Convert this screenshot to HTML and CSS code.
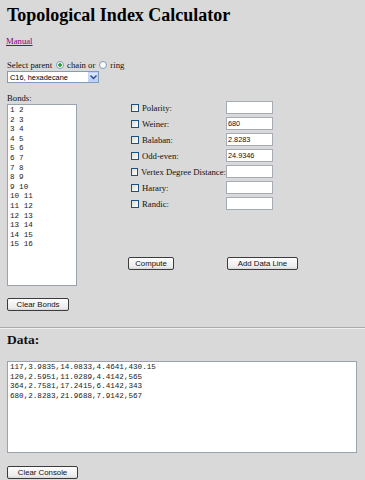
FILE: index.html
```html
<!doctype html>
<html lang="en">
 <head>
  <meta charset="UTF-8">
  <title>Topological Index Calculator</title>
  <link rel="stylesheet" href="styles.css">
 </head>
 <body>
  <div class="top">
   <h1>Topological Index Calculator</h1>
   <p class="manual"><a href="#">Manual</a></p>

   <div class="parent"><span>Select parent</span><input type="radio" name="par" checked><span>chain or</span><input type="radio" name="par"><span>ring</span></div>
   <div class="selbox">
    <select id="parent">
     <option>C16, hexadecane</option>
    </select>
    <span class="arrow"><svg width="7" height="5" viewBox="0 0 7 5"><path d="M0.5 0.5 L3.5 3.5 L6.5 0.5" fill="none" stroke="#2a4d8a" stroke-width="1.4"/></svg></span>
   </div>

   <div class="bondlbl">Bonds:</div>
   <div class="main">
    <div class="left">
     <textarea id="bonds" class="bonds">1 2
2 3
3 4
4 5
5 6
6 7
7 8
8 9
9 10
10 11
11 12
12 13
13 14
14 15
15 16</textarea>
     <button type="button" class="btn clear">Clear Bonds</button>
    </div>

    <div class="right">
     <div class="indices">
      <label><input type="checkbox"> Polarity:</label><input type="text" class="val">
      <label><input type="checkbox"> Weiner:</label><input type="text" class="val" value="680">
      <label><input type="checkbox"> Balaban:</label><input type="text" class="val" value="2.8283">
      <label><input type="checkbox"> Odd-even:</label><input type="text" class="val" value="24.9346">
      <label><input type="checkbox"> Vertex Degree Distance:</label><input type="text" class="val">
      <label><input type="checkbox"> Harary:</label><input type="text" class="val">
      <label><input type="checkbox"> Randic:</label><input type="text" class="val">
     </div>
     <div class="actions">
      <button type="button" class="btn compute">Compute</button>
      <button type="button" class="btn adddata">Add Data Line</button>
     </div>
    </div>
   </div>
  </div>

  <hr>

  <div class="bottom">
   <h2>Data:</h2>
   <textarea id="console" class="console">117,3.9835,14.0833,4.4641,430.15
120,2.5951,11.0289,4.4142,565
364,2.7581,17.2415,6.4142,343
680,2.8283,21.9688,7.9142,567</textarea>
   <button type="button" class="btn clearcon">Clear Console</button>
  </div>
 </body>
</html>
```

FILE: styles.css
```css
*
{
  box-sizing: border-box;
}
body
{
  margin: 0;
  background: #d9d9d9;
  font-family: 'Liberation Serif', serif;
  font-size: 8.7px;
  color: #111;
}
.top, .bottom
{
  padding: 0 7px;
}
h1
{
  margin: 0;
  font-size: 18px;
  font-weight: bold;
  line-height: 30px;
  color: #000;
}
.manual
{
  margin: 5px 0 0 -1px;
  line-height: 12px;
}
.manual a
{
  color: #800080;
}
.parent
{
  margin-top: 13px;
  height: 10px;
  line-height: 10px;
  display: flex;
  align-items: center;
}
.parent input
{
  appearance: none;
  width: 8px;
  height: 8px;
  margin: 0 3px 0 4px;
  border: 1px solid #7f9db9;
  border-radius: 50%;
  background: #fafafa;
}
.parent input:checked
{
  background: radial-gradient(circle, #2f9a2f 0 1.5px, #fafafa 2px);
}
.selbox
{
  position: relative;
  width: 92px;
  height: 12px;
  margin-top: 1px;
}
.selbox select
{
  appearance: none;
  display: block;
  width: 100%;
  height: 12px;
  border: 1px solid #7f9db9;
  border-radius: 0;
  background: #fff;
  font-family: 'Liberation Sans', sans-serif;
  font-size: 7.4px;
  padding: 0 0 0 2px;
  color: #000;
}
.selbox .arrow
{
  position: absolute;
  right: 1px;
  top: 1px;
  width: 10px;
  height: 10px;
  background: linear-gradient(#dfe8fb, #b8cdf5);
  border: 1px solid #c3d3fd;
  display: flex;
  align-items: center;
  justify-content: center;
}
.bondlbl
{
  margin-top: 10px;
  line-height: 10px;
}
.main
{
  display: flex;
  margin-top: 1px;
}
.left
{
  display: flex;
  flex-direction: column;
  align-items: flex-start;
  width: 121px;
}
textarea
{
  display: block;
  margin: 0;
  border: 1px solid #9aa3ad;
  background: #fff;
  resize: none;
  font-family: 'Liberation Mono', monospace;
  font-size: 7.6px;
  line-height: 9.6px;
  padding: 1px 2px;
  overflow-y: scroll;
  color: #222;
}
textarea::-webkit-scrollbar
{
  width: 10px;
  background: #f4f4f0;
}
textarea::-webkit-scrollbar-button:vertical:start:decrement,
textarea::-webkit-scrollbar-button:vertical:end:increment
{
  display: block;
  height: 10px;
  background: #eceee6;
  border: 1px solid #e2e4dc;
}
.bonds
{
  width: 70px;
  height: 182px;
}
.btn
{
  font-family: 'Liberation Sans', sans-serif;
  font-size: 7.8px;
  height: 13px;
  padding: 0;
  border: 1px solid #3c3c3c;
  border-radius: 2px;
  background: linear-gradient(#fdfdfd, #ececec 80%, #d8d8d8);
  color: #111;
  line-height: 11px;
}
.clear
{
  margin-top: 12px;
  width: 62px;
}
.right
{
  display: flex;
  flex-direction: column;
}
.indices
{
  display: grid;
  grid-template-columns: 98px 47px;
  row-gap: 3px;
  margin-top: -3px;
}
.indices label
{
  display: flex;
  align-items: center;
  gap: 3px;
  padding-left: 3px;
  height: 13px;
  white-space: nowrap;
}
.indices input[type=checkbox]
{
  appearance: none;
  width: 8px;
  height: 8px;
  margin: 0;
  border: 1px solid #1c5180;
  background: linear-gradient(135deg, #dcdcd6, #fdfdfb);
}
.val
{
  height: 13px;
  width: 47px;
  margin: 0;
  border: 1px solid #a5acb5;
  background: #fff;
  font-family: 'Liberation Sans', sans-serif;
  font-size: 7.3px;
  padding: 0 1px;
  color: #111;
}
.actions
{
  display: flex;
  margin-top: 47px;
}
.compute
{
  width: 46px;
}
.adddata
{
  width: 71px;
  margin-left: 53px;
}
hr
{
  margin: 16px 0 0;
  border: 0;
  border-top: 1px solid #aaa;
  border-bottom: 1px solid #eee;
}
h2
{
  margin: 0;
  padding-top: 2px;
  font-size: 13.5px;
  line-height: 18px;
}
.console
{
  margin-top: 12px;
  width: 350px;
  height: 92px;
}
.clearcon
{
  margin-top: 13px;
  width: 71px;
}
```
